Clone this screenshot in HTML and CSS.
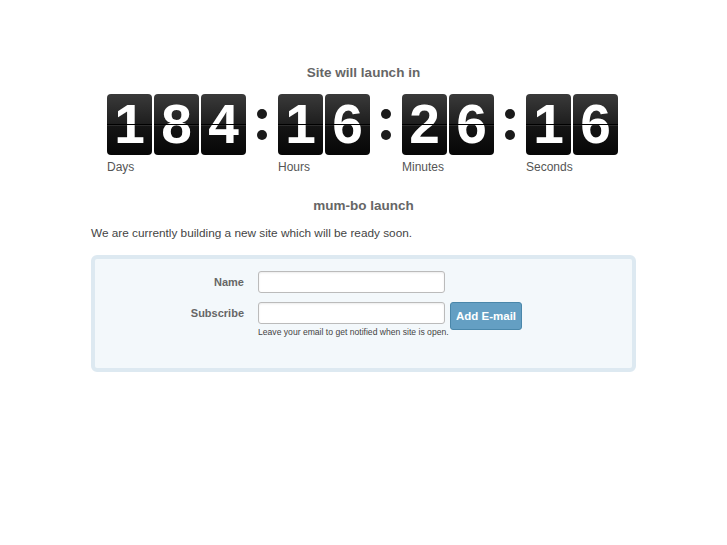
FILE: index.html
```html
<!DOCTYPE html>
<html lang="en">
<head>
  <meta charset="UTF-8">
  <title>mum-bo launch</title>
  <link rel="stylesheet" href="styles.css">
</head>
<body>
  <div class="page">
    <h2 class="title">Site will launch in</h2>

    <!-- countdown -->
    <div class="countdown">
      <div class="unit">
        <div class="digits">
          <span class="tile">1</span><span class="tile">8</span><span class="tile">4</span>
        </div>
        <div class="unit-label">Days</div>
      </div>
      <div class="colon"><i></i><i></i></div>
      <div class="unit">
        <div class="digits">
          <span class="tile">1</span><span class="tile">6</span>
        </div>
        <div class="unit-label">Hours</div>
      </div>
      <div class="colon"><i></i><i></i></div>
      <div class="unit">
        <div class="digits">
          <span class="tile">2</span><span class="tile">6</span>
        </div>
        <div class="unit-label">Minutes</div>
      </div>
      <div class="colon"><i></i><i></i></div>
      <div class="unit">
        <div class="digits">
          <span class="tile">1</span><span class="tile">6</span>
        </div>
        <div class="unit-label">Seconds</div>
      </div>
    </div>

    <h3 class="site-name">mum-bo launch</h3>
    <p class="intro">We are currently building a new site which will be ready soon.</p>

    <!-- subscribe form -->
    <form class="subscribe-box">
      <div class="form-row">
        <label class="form-label" for="name">Name</label>
        <div class="controls">
          <input type="text" id="name" class="text-input">
        </div>
      </div>
      <div class="form-row">
        <label class="form-label" for="email">Subscribe</label>
        <div class="controls">
          <div class="input-line">
            <input type="text" id="email" class="text-input">
            <button type="button" class="add-btn">Add E-mail</button>
          </div>
          <p class="help">Leave your email to get notified when site is open.</p>
        </div>
      </div>
    </form>
  </div>
</body>
</html>
```

FILE: styles.css
```css
html, body {
  margin: 0;
  padding: 0;
}

body {
  font-family: "Liberation Sans", Arial, sans-serif;
  color: #444;
  background: #fff;
}

.page {
  width: 545px;
  margin: 0 auto;
  padding-top: 64px;
}

.title {
  margin: 0;
  font-size: 13.5px;
  line-height: 18px;
  font-weight: bold;
  color: #666;
  text-align: center;
}

/* countdown */
.countdown {
  display: flex;
  justify-content: center;
  margin-top: 12px;
  padding-right: 2px;
}

.digits {
  display: flex;
  gap: 2px;
}

.tile {
  position: relative;
  width: 45px;
  height: 61px;
  border-radius: 4px;
  background: linear-gradient(#3a3a3a, #1e1e1e 49%, #151515 51%, #060606);
  color: #fff;
  font-size: 55px;
  font-weight: bold;
  line-height: 61px;
  text-align: center;
  overflow: hidden;
}

.tile::after {
  content: "";
  position: absolute;
  left: 0;
  right: 0;
  top: 30px;
  height: 1px;
  background: #000;
  box-shadow: 0 1px 0 rgba(255, 255, 255, 0.1);
}

.unit-label {
  margin-top: 5px;
  font-size: 12px;
  line-height: 15px;
  color: #555;
}

.colon {
  width: 32px;
  height: 61px;
  display: flex;
  flex-direction: column;
  align-items: center;
  justify-content: center;
  gap: 11px;
}

.colon i {
  width: 10px;
  height: 10px;
  border-radius: 50%;
  background: #1a1a1a;
}

.site-name {
  margin: 22px 0 0;
  font-size: 13.5px;
  line-height: 18px;
  font-weight: bold;
  color: #666;
  text-align: center;
}

.intro {
  margin: 10px 0 0;
  font-size: 11.8px;
  line-height: 16px;
  color: #444;
}

/* form */
.subscribe-box {
  margin: 14px 0 0;
  border: 4px solid #dde9f1;
  border-radius: 6px;
  background: #f3f8fb;
  padding: 12px 0 30px;
}

.form-row {
  display: grid;
  grid-template-columns: 149px 1fr;
  column-gap: 14px;
  margin-bottom: 9px;
}

.form-row:last-child {
  margin-bottom: 0;
}

.form-label {
  text-align: right;
  font-size: 11px;
  font-weight: bold;
  color: #666;
  line-height: 22px;
}

.input-line {
  display: flex;
  align-items: flex-start;
  gap: 5px;
  height: 22px;
}

.text-input {
  box-sizing: border-box;
  width: 187px;
  height: 22px;
  margin: 0;
  border: 1px solid #bbb;
  border-radius: 3px;
  background: #fff;
  box-shadow: inset 0 1px 2px rgba(0, 0, 0, 0.08);
}

.add-btn {
  box-sizing: border-box;
  height: 28px;
  padding: 0 5px;
  border: 1px solid #4a87aa;
  border-radius: 3px;
  background: #649fc3;
  color: #fff;
  font-family: "Liberation Sans", Arial, sans-serif;
  font-size: 11.5px;
  font-weight: bold;
}

.help {
  margin: 2px 0 0;
  font-size: 8.6px;
  line-height: 12px;
  color: #444;
}
```
